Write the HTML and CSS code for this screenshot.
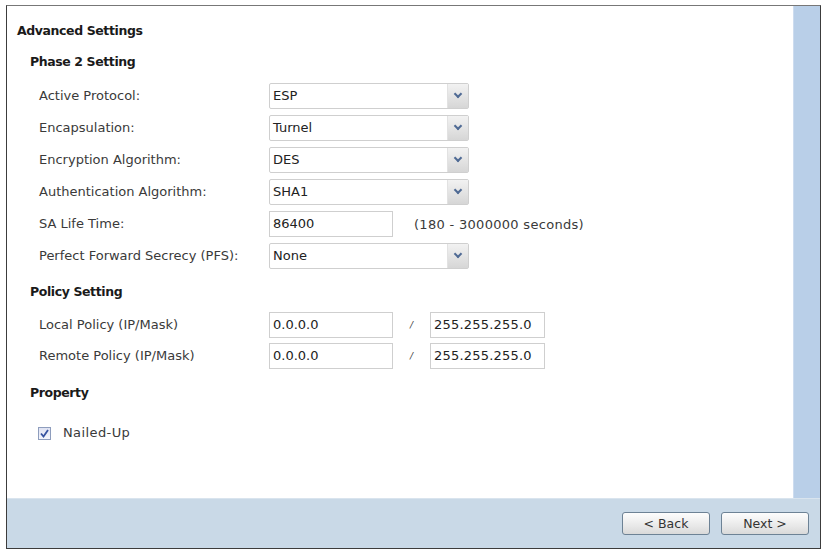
FILE: index.html
```html
<!DOCTYPE html>
<html lang="en">
<head>
    <meta charset="UTF-8">
    <title>Advanced Settings</title>
    <link rel="stylesheet" href="styles.css">
</head>
<body>
    <div class = "frame">
        <div class = "main">
            <div class = "content">
                <div class = "title">Advanced Settings</div>

                <div class = "groupTitle">Phase 2 Setting</div>
                <div class = "fields">
                    <div class = "label">Active Protocol:</div>
                    <div class = "select"><span class = "value">ESP</span><span class = "arrow"></span></div>

                    <div class = "label">Encapsulation:</div>
                    <div class = "select"><span class = "value">Turnel</span><span class = "arrow"></span></div>

                    <div class = "label">Encryption Algorithm:</div>
                    <div class = "select"><span class = "value">DES</span><span class = "arrow"></span></div>

                    <div class = "label">Authentication Algorithm:</div>
                    <div class = "select"><span class = "value">SHA1</span><span class = "arrow"></span></div>

                    <div class = "label">SA Life Time:</div>
                    <div class = "inline">
                        <div class = "textBox lifeTime">86400</div>
                        <span class = "hint">(180 - 3000000 seconds)</span>
                    </div>

                    <div class = "label">Perfect Forward Secrecy (PFS):</div>
                    <div class = "select"><span class = "value">None</span><span class = "arrow"></span></div>
                </div>

                <div class = "groupTitle policyTitle">Policy Setting</div>
                <div class = "fields policyFields">
                    <div class = "label">Local Policy (IP/Mask)</div>
                    <div class = "inline">
                        <div class = "textBox ip">0.0.0.0</div>
                        <span class = "slash">/</span>
                        <div class = "textBox mask">255.255.255.0</div>
                    </div>

                    <div class = "label">Remote Policy (IP/Mask)</div>
                    <div class = "inline">
                        <div class = "textBox ip">0.0.0.0</div>
                        <span class = "slash">/</span>
                        <div class = "textBox mask">255.255.255.0</div>
                    </div>
                </div>

                <div class = "groupTitle propertyTitle">Property</div>
                <label class = "check">
                    <span class = "box">
                        <svg width="9" height="9" viewBox="0 0 9 9"><path d="M1 4.5 L3.5 7.5 L8 1" fill="none" stroke="#3552a0" stroke-width="1.8"/></svg>
                    </span>
                    <span>Nailed-Up</span>
                </label>
            </div>
            <div class = "strip"></div>
        </div>
        <div class = "footer">
            <div class = "button">&lt; Back</div>
            <div class = "button">Next &gt;</div>
        </div>
    </div>
</body>
</html>
```

FILE: styles.css
```css
body {
    margin: 0;
    background-color: white;
    font-family: "DejaVu Sans", Verdana, sans-serif;
    font-size: 13px;
    color: #3a3a3a;
}

.frame {
    margin: 5px 2px 2px 6px;
    height: 542px;
    border: 1px solid #3c3c3c;
    border-top-color: #777;
    display: flex;
    flex-direction: column;
}

.main {
    flex: 1;
    display: flex;
}

.content {
    flex: 1;
    padding: 17px 0 0 10px;
}

.strip {
    width: 26px;
    background-color: #b9cfe8;
    border-left: 1px solid #cddcef;
}

.title, .groupTitle {
    font-weight: bold;
    font-size: 12.5px;
    line-height: 16px;
    color: #1a1a1a;
    letter-spacing: -0.4px;
}

.groupTitle {
    margin: 15px 0 0 13px;
}

.fields {
    margin: 13px 0 0 22px;
    display: grid;
    grid-template-columns: 230px auto;
    row-gap: 6px;
    align-items: center;
}

.label {
    line-height: 26px;
    white-space: nowrap;
}

.select {
    width: 200px;
    height: 26px;
    box-sizing: border-box;
    border: 1px solid #cfcfcf;
    border-radius: 2px;
    display: flex;
    background-color: white;
}

.value {
    flex: 1;
    line-height: 24px;
    padding-left: 3px;
    color: #222;
}

.arrow {
    width: 20px;
    background: linear-gradient(#f2f2f2, #d6d6d6);
    border-left: 1px solid #e2e2e2;
    position: relative;
}

.arrow::after {
    content: "";
    position: absolute;
    left: 7px;
    top: 7px;
    width: 4px;
    height: 4px;
    border-right: 2px solid #4f6a94;
    border-bottom: 2px solid #4f6a94;
    transform: rotate(45deg);
}

.inline {
    display: flex;
    align-items: center;
}

.textBox {
    height: 26px;
    box-sizing: border-box;
    border: 1px solid #cfcfcf;
    line-height: 24px;
    padding-left: 3px;
    color: #222;
    background-color: white;
    white-space: nowrap;
}

.lifeTime, .ip {
    width: 124px;
}

.mask {
    width: 115px;
    letter-spacing: 0.2px;
}

.hint {
    margin-left: 21px;
    letter-spacing: 0.3px;
    white-space: nowrap;
}

.slash {
    width: 37px;
    text-align: center;
    font-size: 9px;
    font-style: italic;
}

.policyTitle {
    margin-top: 15px;
}

.policyFields {
    margin-top: 12px;
    row-gap: 5px;
}

.propertyTitle {
    margin-top: 16px;
}

.check {
    margin: 24px 0 0 21px;
    display: flex;
    align-items: center;
    gap: 12px;
    line-height: 16px;
    letter-spacing: 0.4px;
}

.box {
    width: 13px;
    height: 13px;
    box-sizing: border-box;
    border: 1px solid #8e9dbd;
    background: linear-gradient(#dfe3f3, #f3f4fb);
    display: flex;
    align-items: center;
    justify-content: center;
}

.footer {
    height: 49px;
    background-color: #c9d9e7;
    border-top: 1px solid #d9e4ee;
    display: flex;
    justify-content: flex-end;
    align-items: center;
    gap: 11px;
    padding-right: 11px;
}

.button {
    width: 88px;
    height: 23px;
    box-sizing: border-box;
    border: 1px solid #6d8295;
    border-radius: 3px;
    background: linear-gradient(#fdfdfd, #e9e9e9 60%, #d9d9d9);
    text-align: center;
    line-height: 21px;
    font-size: 12.5px;
    color: #333;
}
```
